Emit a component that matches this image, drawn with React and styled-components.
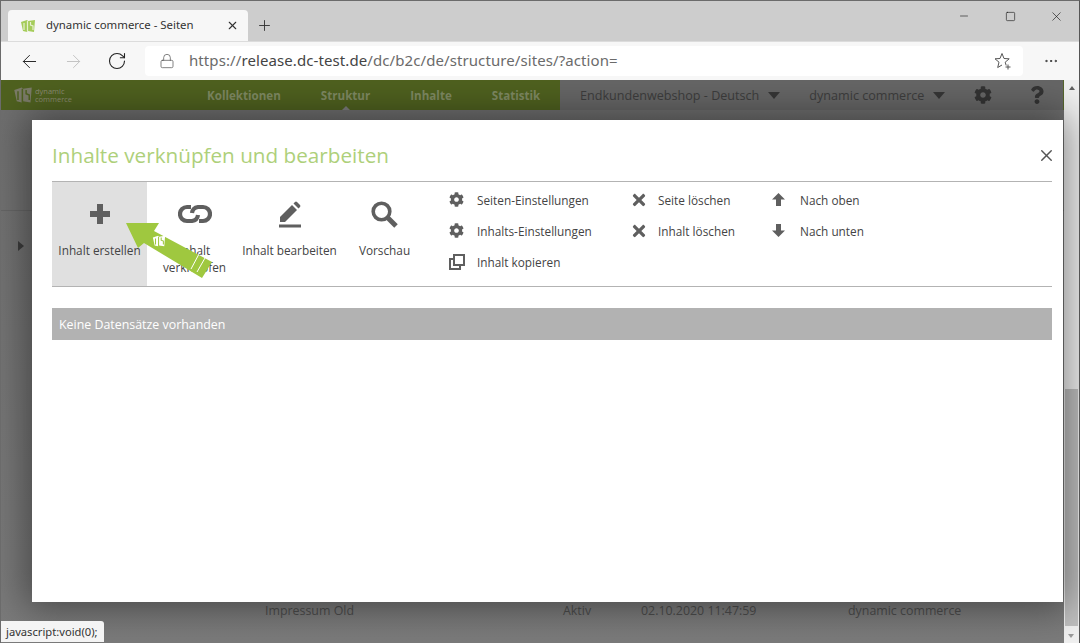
import React from 'react';
import styled, { createGlobalStyle } from 'styled-components';
import { Plus, X, Minus, Square, ArrowLeft, ArrowRight, RotateCw, Lock, MoreHorizontal } from 'lucide-react';
import { FaCog, FaTimes, FaQuestion } from 'react-icons/fa';

const Global = createGlobalStyle`
  html, body { margin: 0; padding: 0; height: 643px; overflow: hidden; background: #777; }
  * { box-sizing: border-box; }
`;
const UI = `"Open Sans", "Noto Sans", sans-serif`;
const Frame = styled.div`
  width: 1080px; height: 643px; position: relative; overflow: hidden;
  border: 1px solid #6b6b6b; border-right-color: #555; border-bottom: 0;
  display: flex; flex-direction: column; font-family: ${UI};
`;
const TabStrip = styled.div`
  height: 40px; background: #cdcdcd; display: flex; align-items: flex-end; padding-left: 7px; flex: none;
`;
const Tab = styled.div`
  width: 240px; height: 31px; background: #f7f7f7; border-radius: 4px 4px 0 0;
  display: flex; align-items: center; padding: 0 9px 0 12px; font-size: 11.4px; color: #333; font-family: "Noto Sans", sans-serif;
`;
const TabTitle = styled.span` flex: 1; margin: 0 0 2px 10px; `;
const NewTab = styled.div` width: 32px; height: 31px; display: flex; align-items: center; justify-content: center; color: #333; `;
const WinControls = styled.div` margin-left: auto; align-self: flex-start; display: flex; height: 30px; align-items: center; color: #111; `;
const WinBtn = styled.div` width: 46px; display: flex; justify-content: center; `;
const Toolbar = styled.div`
  height: 39px; background: #f7f7f7; flex: none; display: flex; align-items: center; padding: 0 0 0 6px;
  border-top: 1px solid #dcdcdc;
`;
const NavBtn = styled.div`
  width: 44px; display: flex; justify-content: center; color: ${p => p.$off ? '#c2c2c2' : '#222'};
`;
const Address = styled.div`
  width: 878px; height: 30px; background: #fff; border-radius: 4px; display: flex; align-items: center; margin-left: 6px;
  padding: 0 11px 0 14px; font-size: 15px; color: #707070; font-family: "Noto Sans", sans-serif; letter-spacing: .09px;
`;
const Host = styled.span` color: #444; `;
const Scheme = styled.span` color: #6b6b6b; margin: 0 0 2px 14px; `;
const AddressEnd = styled.div` margin-left: auto; display: flex; `;
const More = styled.div` flex: 1; display: flex; justify-content: center; color: #333; `;
const Viewport = styled.div` flex: 1; position: relative; overflow: hidden; display: flex; background: #7d7d7d; `;
const PageCol = styled.div` flex: 1; display: flex; flex-direction: column; min-width: 0; `;
const TopBar = styled.div` height: 30px; display: flex; background: #4f611f; flex: none; `;
const Brand = styled.div`
  width: 191px; display: flex; align-items: center; padding-left: 12px; gap: 2px; color: #8b8b73; font-size: 7.5px; line-height: 8px;
`;
const MainNav = styled.div` display: flex; width: 368px; color: #7f8a63; font: 700 11.6px ${UI}; align-items: center; gap: 40px; padding-left: 15px; `;
const NavItem = styled.span` position: relative; `;
const Caret = styled.i`
  position: absolute; left: 50%; bottom: -7px; margin-left: -4px; border: 4px solid transparent; border-top: 0; border-bottom-color: #7d7d7d; border-bottom-width: 4px;
`;
const RightNav = styled.div`
  flex: 1; background: #666; display: flex; align-items: center; color: #3d3d3d; font-size: 12.6px; padding-left: 20px;
  border-right: 1px solid #55652b;
`;
const Drop = styled.span` display: flex; align-items: center; margin-right: ${p => p.$gap}px; `;
const Tri = styled.i` margin-left: 9px; border: 6px solid transparent; border-top: 7px solid #363636; border-bottom: 0; `;
const Dim = styled.div`
  flex: 1; position: relative;
  background: linear-gradient(#6f6f6f, #7b7b7b);
`;
const RowLine = styled.div` position: absolute; left: 0; right: 0; top: 100px; height: 1px; background: #666; `;
const Expand = styled.i`
  position: absolute; left: 17px; top: 131px; border: 5px solid transparent; border-left: 6px solid #3c3c3c; border-right: 0;
`;
const GhostRow = styled.div`
  position: absolute; left: 0; top: 492px; font-size: 12.4px; color: #4c4c4c; width: 100%;
`;
const Ghost = styled.span` position: absolute; left: ${p => p.$x}px; white-space: nowrap; `;
const Scrollbar = styled.div` width: 15px; background: #f0f0f0; flex: none; position: relative; display: flex; flex-direction: column; align-items: center; `;
const SbUp = styled.i` margin-top: 6px; border: 3.5px solid transparent; border-top: 0; border-bottom: 4px solid #606060; `;
const SbThumb = styled.div` position: absolute; left: 1px; right: 1px; top: 309px; bottom: 17px; background: #bfbfbf; `;
const SbDown = styled.i` position: absolute; bottom: 5px; left: 4px; border: 3.5px solid transparent; border-bottom: 0; border-top: 4px solid #9a9a9a; `;
const Status = styled.div`
  position: absolute; left: 0; bottom: 1px; height: 21px; padding: 0 6px 0 5px; background: #f4f4f4; border-radius: 0 3px 0 0;
  font: 11.2px "Noto Sans", sans-serif; color: #333; display: flex; align-items: center;
`;
const Modal = styled.div`
  position: absolute; left: 31px; top: 40px; width: 1031px; height: 482px; background: #fff;
  box-shadow: 0 0 36px 6px rgba(0,0,0,.42); padding: 20px 11px 0 20px; display: flex; flex-direction: column;
`;
const Head = styled.div` display: flex; align-items: center; justify-content: space-between; height: 41px; padding-bottom: 11px; `;
const Title = styled.h2` margin: 0; font: 400 20.7px ${UI}; color: #aed07a; `;
const Close = styled.div` color: #555; display: flex; margin-right: -4px; `;
const Actions = styled.div`
  height: 106px; border-top: 1px solid #b3b3b3; border-bottom: 1px solid #b3b3b3; display: flex; flex: none;
`;
const BigBtn = styled.div`
  width: ${p => p.$w}px; background: ${p => p.$on ? '#e0e0e0' : '#fff'}; display: flex; flex-direction: column; align-items: center;
  color: #5f5f5f; font-size: 11.8px; padding-top: 19px; text-align: center;
`;
const BigIcon = styled.div` height: 26px; display: flex; align-items: center; justify-content: center; `;
const BigLabel = styled.div` margin-top: 15px; line-height: 17px; color: #444; white-space: pre; `;
const Groups = styled.div` display: flex; padding: 2px 0 0 17px; `;
const Group = styled.div` width: ${p => p.$w}px; display: flex; flex-direction: column; `;
const Small = styled.div` height: 31px; display: flex; align-items: center; font-size: 11.8px; color: #444; `;
const SmallIcon = styled.span` width: 28px; display: flex; color: #5f5f5f; `;
const Empty = styled.div`
  margin-top: 21px; height: 32px; background: #b2b2b2; color: #fff; font-size: 12.4px; font-weight: 500; display: flex; align-items: center; padding-left: 7px;
`;
const Arrow = styled.svg` position: absolute; left: 94px; top: 103px; `;

const Logo = ({ size = 16, a = '#a5cc5a', b = '#e6f0d0' }) => (
  <svg width={size} height={size} viewBox="0 0 16 16">
    <path d="M1 4l6-2 1 1 7-1-1 12-6-1-1 1-4-1z" fill={a} />
    <path d="M4 5v7M7.5 3v11M10.5 4v3l2.5 1v4" stroke={b} strokeWidth="1.2" fill="none" />
  </svg>
);

const FavStar = () => (
  <svg width="18" height="18" viewBox="0 0 18 18" fill="none" stroke="#555" strokeWidth="1">
    <path d="M8 1.5l2 5 5.2.3-4 3.4 1 3.3M8 1.5l-2 5-5 .3 4 3.4-1.3 5.3L8 13" />
    <path d="M14 12.5v5M11.5 15h5" />
  </svg>
);
const PlusBig = () => (
  <svg width="20" height="20" viewBox="0 0 20 20" fill="#5f5f5f">
    <path d="M7 0h6v7h7v6h-7v7H7v-7H0V7h7z" />
  </svg>
);
const LinkIcon = () => (
  <svg width="34" height="20" viewBox="0 0 34 20" fill="none" stroke="#5f5f5f" strokeWidth="4.2">
    <path d="M13 3H9a7 7 0 000 14h5a7 7 0 006-6" />
    <path d="M21 17h4a7 7 0 000-14h-5a7 7 0 00-6 6" />
  </svg>
);
const Pen = () => (
  <svg width="24" height="27" viewBox="0 0 24 27" fill="#5f5f5f">
    <path d="M2 16L14 4l5 5L7 21H2z" />
    <path d="M15.5 2.5l1.5-1.500a1.500 1.500 0 012 0l3 3a1.500 1.500 0 010 2L20.500 7.500z" />
    <rect x="1" y="23.500" width="22" height="3" />
  </svg>
);
const Lens = () => (
  <svg width="27" height="27" viewBox="0 0 27 27" fill="none" stroke="#5f5f5f">
    <circle cx="10.500" cy="10.500" r="8.300" strokeWidth="3.600" />
    <path d="M16.500 16.500L25 25" strokeWidth="5" />
  </svg>
);
const Copy = () => (
  <svg width="16" height="16" viewBox="0 0 16 16" fill="none" stroke="#5f5f5f" strokeWidth="2">
    <path d="M5 1h10v10H5z" />
    <path d="M4 5H1v10h10v-3" />
  </svg>
);
const UpBlock = ({ flip }) => (
  <svg width="13" height="13" viewBox="0 0 13 13" fill="#5f5f5f" style={flip ? { transform: 'scaleY(-1)' } : undefined}>
    <path d="M6.500 0L13 6.500H9V13H4V6.500H0z" />
  </svg>
);

export default function App() {
  return (
    <Frame>
      <Global />
      <TabStrip>
        <Tab>
          <Logo />
          <TabTitle>dynamic commerce - Seiten</TabTitle>
          <X size={13} strokeWidth={2} />
        </Tab>
        <NewTab><Plus size={17} strokeWidth={1.3} /></NewTab>
        <WinControls>
          <WinBtn><Minus size={12} strokeWidth={1.2} /></WinBtn>
          <WinBtn><Square size={11} strokeWidth={1.3} /></WinBtn>
          <WinBtn><X size={15} strokeWidth={1} /></WinBtn>
        </WinControls>
      </TabStrip>
      <Toolbar>
        <NavBtn><ArrowLeft size={21} strokeWidth={1.1} /></NavBtn>
        <NavBtn $off><ArrowRight size={21} strokeWidth={1.1} /></NavBtn>
        <NavBtn><RotateCw size={20} strokeWidth={1.3} /></NavBtn>
        <Address>
          <Lock size={16} strokeWidth={1.1} color="#555" />
          <Scheme>https://<Host>release.dc-test.de</Host>/dc/b2c/de/structure/sites/?action=</Scheme>
          <AddressEnd><FavStar /></AddressEnd>
        </Address>
        <More><MoreHorizontal size={16} strokeWidth={1.5} /></More>
      </Toolbar>
      <Viewport>
        <PageCol>
          <TopBar>
            <Brand>
              <Logo size={20} a="#7b7b68" b="#4f611f" />
              <span>dynamic<br />commerce</span>
            </Brand>
            <MainNav>
              <NavItem>Kollektionen</NavItem>
              <NavItem>Struktur<Caret /></NavItem>
              <NavItem>Inhalte</NavItem>
              <NavItem>Statistik</NavItem>
            </MainNav>
            <RightNav>
              <Drop $gap={29}>Endkundenwebshop - Deutsch<Tri /></Drop>
              <Drop $gap={29}>dynamic commerce<Tri /></Drop>
              <Drop $gap={36}><FaCog size={18} color="#333" /></Drop>
              <Drop $gap={0}><FaQuestion size={18} color="#333" /></Drop>
            </RightNav>
          </TopBar>
          <Dim>
            <RowLine />
            <Expand />
            <GhostRow>
              <Ghost $x={264}>Impressum Old</Ghost>
              <Ghost $x={562}>Aktiv</Ghost>
              <Ghost $x={640}>02.10.2020 11:47:59</Ghost>
              <Ghost $x={847}>dynamic commerce</Ghost>
            </GhostRow>
          </Dim>
        </PageCol>
        <Scrollbar>
          <SbUp />
          <SbThumb />
          <SbDown />
        </Scrollbar>
        <Modal>
          <Head>
            <Title>Inhalte verknüpfen und bearbeiten</Title>
            <Close><X size={19} strokeWidth={1.8} /></Close>
          </Head>
          <Actions>
            <BigBtn $w={95} $on>
              <BigIcon><PlusBig /></BigIcon>
              <BigLabel>Inhalt erstellen</BigLabel>
            </BigBtn>
            <BigBtn $w={95}>
              <BigIcon><LinkIcon /></BigIcon>
              <BigLabel>{'Inhalt\nverknüpfen'}</BigLabel>
            </BigBtn>
            <BigBtn $w={95}>
              <BigIcon><Pen /></BigIcon>
              <BigLabel>Inhalt bearbeiten</BigLabel>
            </BigBtn>
            <BigBtn $w={95}>
              <BigIcon><Lens /></BigIcon>
              <BigLabel>Vorschau</BigLabel>
            </BigBtn>
            <Groups>
              <Group $w={181}>
                <Small><SmallIcon><FaCog size={15} /></SmallIcon>Seiten-Einstellungen</Small>
                <Small><SmallIcon><FaCog size={15} /></SmallIcon>Inhalts-Einstellungen</Small>
                <Small><SmallIcon><Copy /></SmallIcon>Inhalt kopieren</Small>
              </Group>
              <Group $w={142}>
                <Small><SmallIcon><FaTimes size={18} /></SmallIcon>Seite löschen</Small>
                <Small><SmallIcon><FaTimes size={18} /></SmallIcon>Inhalt löschen</Small>
              </Group>
              <Group $w={120}>
                <Small><SmallIcon><UpBlock /></SmallIcon>Nach oben</Small>
                <Small><SmallIcon><UpBlock flip /></SmallIcon>Nach unten</Small>
              </Group>
            </Groups>
          </Actions>
          <Empty>Keine Datensätze vorhanden</Empty>
          <Arrow width="90" height="60" viewBox="0 0 90 60">
            <path d="M0 0H33L28 8 86 39 76 55 18 20 12 25Z" fill="#9fc83f" />
            <path d="M73 31L65 46M79 35L71 49" stroke="#fff" strokeWidth="1" />
            <g transform="translate(26 11)">
              <Logo size={14} a="#fff" b="#9fc83f" />
            </g>
          </Arrow>
        </Modal>
        <Status>javascript:void(0);</Status>
      </Viewport>
    </Frame>
  );
}
